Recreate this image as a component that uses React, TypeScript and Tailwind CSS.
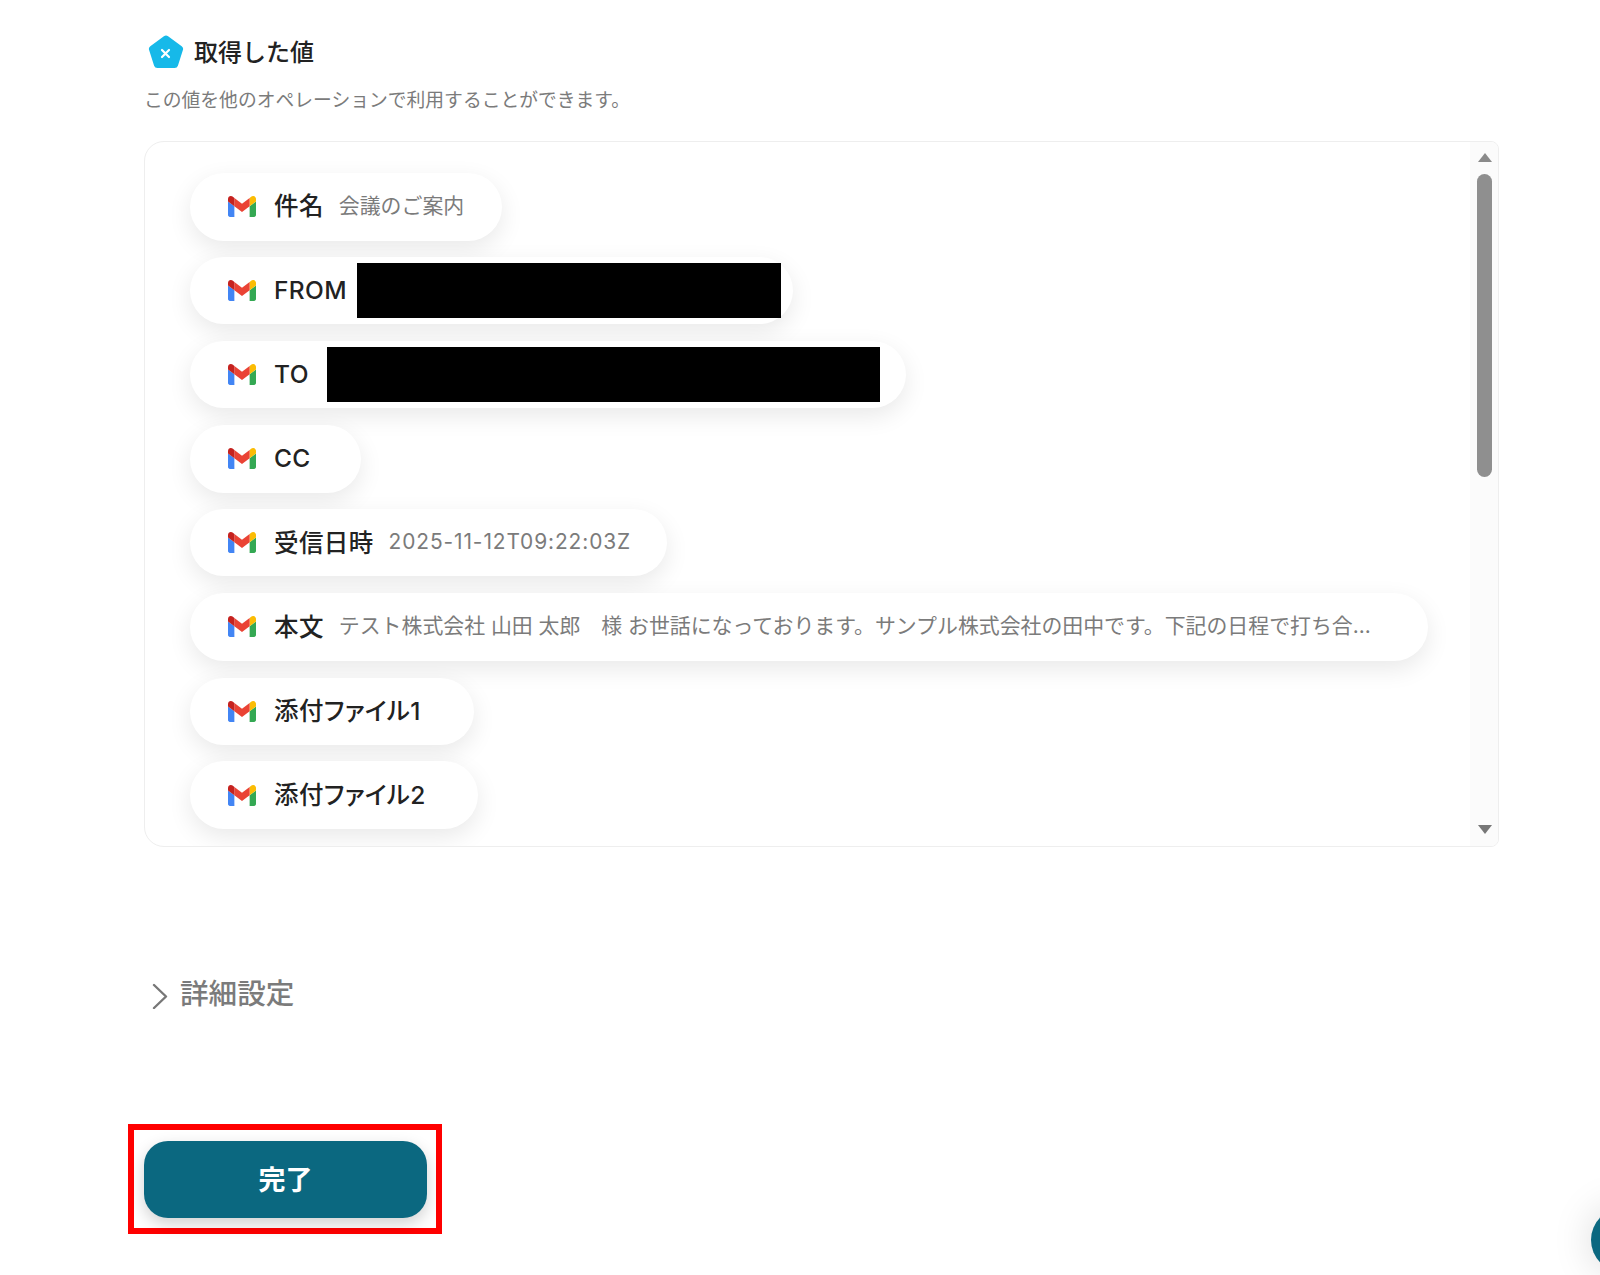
import type { ReactNode } from 'react';

const GmailIcon = () => (
  <svg viewBox="52 42 88 66" className="h-[21px] w-[28px] shrink-0">
    <path fill="#4285f4" d="M58 108h14V74L52 59v43c0 3.32 2.69 6 6 6" />
    <path fill="#34a853" d="M120 108h14c3.32 0 6-2.69 6-6V59l-20 15" />
    <path fill="#fbbc04" d="M120 48v26l20-15v-8c0-7.42-8.47-11.65-14.4-7.2" />
    <path fill="#ea4335" d="M72 74V48l24 18 24-18v26L96 92" />
    <path fill="#c5221f" d="M52 51v8l20 15V48l-5.6-4.2c-5.94-4.45-14.4-.22-14.4 7.2" />
  </svg>
);

const Pentagon = () => (
  <svg viewBox="0 0 36 34" className="h-[34px] w-[36px] shrink-0">
    <path
      fill="#16b9e9"
      d="M15.9 1.2a3.5 3.5 0 0 1 4.2 0l13.6 10a3.5 3.5 0 0 1 1.2 3.9l-5 15.6a3.5 3.5 0 0 1-3.3 2.4H9.4a3.5 3.5 0 0 1-3.3-2.4l-5-15.6a3.5 3.5 0 0 1 1.2-3.9z"
    />
    <path stroke="#fff" strokeWidth="2.2" strokeLinecap="round" d="M14 15l7 7M21 15l-7 7" />
  </svg>
);

type PillProps = {
  label: string;
  width: string;
  height: string;
  children?: ReactNode;
};

const Pill = ({ label, width, height, children }: PillProps) => (
  <div
    className={`flex shrink-0 items-center rounded-full bg-white pl-[38px] shadow-[0_8px_24px_rgba(0,0,0,0.09)] ${width} ${height}`}
  >
    <GmailIcon />
    <span className="ml-[18px] shrink-0 text-[24.5px] leading-none font-medium tracking-[0.4px] text-[#222] [font-feature-settings:'palt']">
      {label}
    </span>
    {children}
  </div>
);

const Value = ({ children, spaced }: { children: ReactNode; spaced?: boolean }) => (
  <span
    className={`ml-[15px] text-[20.9px] leading-none whitespace-nowrap text-[#7b7b7b] ${spaced ? 'tracking-[0.9px]' : ''}`}
  >
    {children}
  </span>
);

const Redacted = ({ margin, width }: { margin: string; width: string }) => (
  <span className={`h-[55px] bg-black ${margin} ${width}`} />
);

export default function App() {
  return (
    <div className="h-[1275px] overflow-hidden bg-white pt-[35px] pl-[144px] font-['Inter','Noto_Sans_CJK_JP',sans-serif]">
      <div className="flex items-center pl-[4px]">
        <Pentagon />
        <h2 className="ml-[10px] pt-[2px] text-[24px] leading-[32px] font-medium text-[#222]">取得した値</h2>
      </div>
      <p className="mt-[19px] text-[18.8px] leading-[26px] text-[#7b7b7b]">
        この値を他のオペレーションで利用することができます。
      </p>

      <div className="mt-[27px] flex h-[706px] w-[1355px] overflow-hidden rounded-l-[20px] rounded-r-[8px] border border-[#eeeeee]">
        <div className="flex flex-1 flex-col gap-[16.7px] overflow-hidden pt-[30.5px] pl-[45px]">
          <Pill label="件名" width="w-[312px]" height="h-[68px]">
            <Value>会議のご案内</Value>
          </Pill>
          <Pill label="FROM" width="w-[603px]" height="h-[67px]">
            <Redacted margin="ml-[10px]" width="w-[424px]" />
          </Pill>
          <Pill label="TO" width="w-[716px]" height="h-[67px]">
            <Redacted margin="ml-[18px]" width="w-[553px]" />
          </Pill>
          <Pill label="CC" width="w-[171px]" height="h-[68px]" />
          <Pill label="受信日時" width="w-[477px]" height="h-[67px]">
            <Value spaced>2025-11-12T09:22:03Z</Value>
          </Pill>
          <Pill label="本文" width="w-[1238px]" height="h-[68px]">
            <Value>テスト株式会社 山田 太郎　様 お世話になっております。サンプル株式会社の田中です。下記の日程で打ち合...</Value>
          </Pill>
          <Pill label="添付ファイル1" width="w-[284px]" height="h-[67px]" />
          <Pill label="添付ファイル2" width="w-[288px]" height="h-[68px]" />
        </div>

        <div className="flex w-[28px] shrink-0 flex-col items-center bg-[#fbfbfb] pt-[11px] pb-[12px] pl-[1px]">
          <div className="h-0 w-0 border-x-[7px] border-b-[9px] border-x-transparent border-b-[#8a8a8a]" />
          <div className="mt-[12px] h-[303px] w-[15px] rounded-full bg-[#8f8f8f]" />
          <div className="mt-auto h-0 w-0 border-x-[7px] border-t-[9px] border-x-transparent border-t-[#777777]" />
        </div>
      </div>

      <div className="mt-[127px] flex items-center pl-[7px]">
        <svg viewBox="0 0 18 26" className="h-[26px] w-[18px] shrink-0 translate-y-[2px]" fill="none">
          <path d="M3 2l12 11.5L3 25" stroke="#777" strokeWidth="2.4" strokeLinecap="round" strokeLinejoin="round" />
        </svg>
        <span className="ml-[11px] text-[28.6px] leading-[40px] font-medium text-[#7b7b7b]">詳細設定</span>
      </div>

      <div className="mt-[110px] -ml-[16px] box-border w-[314px] border-[6px] border-[#ff0000] px-[10px] pt-[11px] pb-[10px]">
        <button className="flex h-[77px] w-[283px] items-center justify-center rounded-[24px] bg-[#0b6880] pt-[4px] text-[27px] font-bold text-white shadow-[0_6px_16px_rgba(0,0,0,0.18)]">
          完了
        </button>
      </div>

      <div className="absolute top-[1208px] left-[1591px] h-[64px] w-[64px] rounded-full bg-[#0b6880] shadow-[0_0_40px_rgba(0,0,0,0.15)]" />
    </div>
  );
}
